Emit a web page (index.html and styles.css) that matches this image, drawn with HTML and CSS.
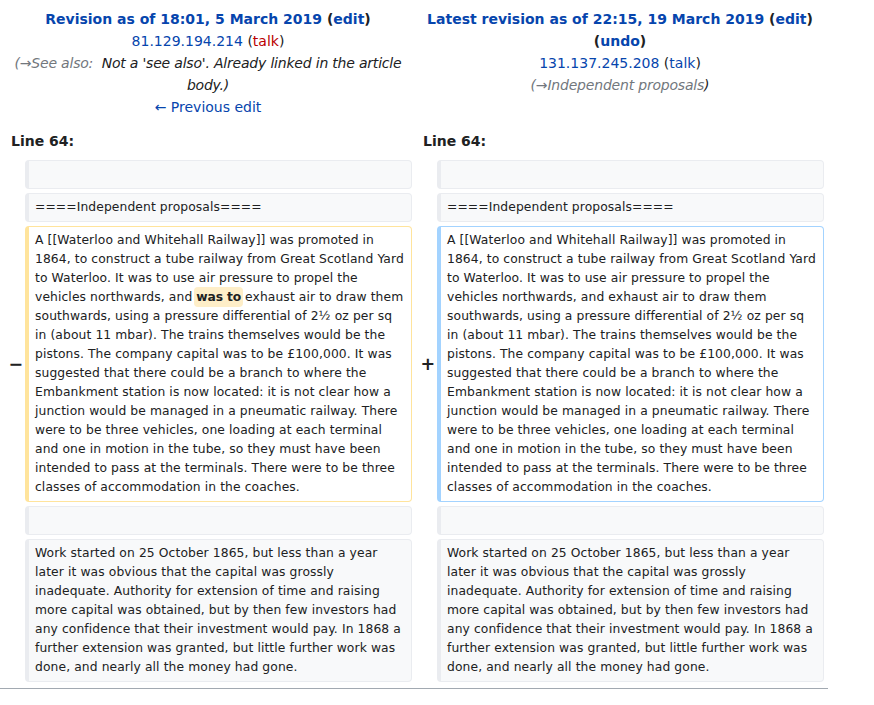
FILE: index.html
```html
<!DOCTYPE html>
<html lang="en">
<head>
<meta charset="utf-8">
<title>Diff</title>
<link rel="stylesheet" href="styles.css">
</head>
<body>
<div class="page">
  <div class="diff">
    <div class="title">
      <div><strong><a class="link" href="#">Revision as of 18:01, 5 March 2019</a> (<a class="link" href="#">edit</a>)</strong></div>
      <div><a class="link" href="#">81.129.194.214</a> (<a class="new" href="#">talk</a>)</div>
      <div class="comment"><span class="auto">(→See also:</span>&nbsp; Not a 'see also'. Already linked in the article body.)</div>
      <div><a class="link" href="#">← Previous edit</a></div>
    </div>
    <div class="title">
      <div><strong><a class="link" href="#">Latest revision as of 22:15, 19 March 2019</a> (<a class="link" href="#">edit</a>)</strong> <strong>(<a class="link" href="#">undo</a>)</strong></div>
      <div><a class="link" href="#">131.137.245.208</a> (<a class="link" href="#">talk</a>)</div>
      <div class="comment"><span class="auto">(→Independent proposals</span>)</div>
    </div>

    <div class="lineno">Line 64:</div>
    <div class="lineno">Line 64:</div>

    <div class="marker"></div>
    <div class="cell context"><br></div>
    <div class="marker"></div>
    <div class="cell context"><br></div>

    <div class="marker"></div>
    <div class="cell context">====Independent proposals====</div>
    <div class="marker"></div>
    <div class="cell context">====Independent proposals====</div>

    <div class="marker">−</div>
    <div class="cell deleted">A [[Waterloo and Whitehall Railway]] was promoted in 1864, to construct a tube railway from Great Scotland Yard to Waterloo. It was to use air pressure to propel the vehicles northwards, and <span class="change">was to</span> exhaust air to draw them southwards, using a pressure differential of 2½ oz per sq in (about 11 mbar). The trains themselves would be the pistons. The company capital was to be £100,000. It was suggested that there could be a branch to where the Embankment station is now located: it is not clear how a junction would be managed in a pneumatic railway. There were to be three vehicles, one loading at each terminal and one in motion in the tube, so they must have been intended to pass at the terminals. There were to be three classes of accommodation in the coaches.</div>
    <div class="marker">+</div>
    <div class="cell added">A [[Waterloo and Whitehall Railway]] was promoted in 1864, to construct a tube railway from Great Scotland Yard to Waterloo. It was to use air pressure to propel the vehicles northwards, and exhaust air to draw them southwards, using a pressure differential of 2½ oz per sq in (about 11 mbar). The trains themselves would be the pistons. The company capital was to be £100,000. It was suggested that there could be a branch to where the Embankment station is now located: it is not clear how a junction would be managed in a pneumatic railway. There were to be three vehicles, one loading at each terminal and one in motion in the tube, so they must have been intended to pass at the terminals. There were to be three classes of accommodation in the coaches.</div>

    <div class="marker"></div>
    <div class="cell context"><br></div>
    <div class="marker"></div>
    <div class="cell context"><br></div>

    <div class="marker"></div>
    <div class="cell context">Work started on 25 October 1865, but less than a year later it was obvious that the capital was grossly inadequate. Authority for extension of time and raising more capital was obtained, but by then few investors had any confidence that their investment would pay. In 1868 a further extension was granted, but little further work was done, and nearly all the money had gone.</div>
    <div class="marker"></div>
    <div class="cell context">Work started on 25 October 1865, but less than a year later it was obvious that the capital was grossly inadequate. Authority for extension of time and raising more capital was obtained, but by then few investors had any confidence that their investment would pay. In 1868 a further extension was granted, but little further work was done, and nearly all the money had gone.</div>
  </div>
  <hr class="diff-hr">
</div>
</body>
</html>
```
FILE: styles.css
```css
html, body {
  margin: 0;
  padding: 0;
  background: #fff;
}
body {
  font-family: "DejaVu Sans", sans-serif;
  font-size: 14px;
  color: #202122;
}
.page {
  width: 828px;
}
.diff {
  display: grid;
  grid-template-columns: 17px 1fr 17px 1fr;
  gap: 4px;
  padding: 4px;
}
.title {
  grid-column: span 2;
  text-align: center;
  padding: 4px 5px;
  line-height: 22px;
}
.link {
  color: #0645ad;
  text-decoration: none;
}
.new {
  color: #ba0000;
  text-decoration: none;
}
.comment {
  font-style: italic;
  letter-spacing: -0.2px;
}
.auto {
  color: #72777d;
}
.lineno {
  grid-column: span 2;
  font-weight: bold;
  padding: 4px 7px;
  line-height: 22px;
}
.marker {
  align-self: center;
  font-size: 17.5px;
  font-weight: bold;
  line-height: 1.2;
  padding: 0 4.4px;
  white-space: nowrap;
}
.cell {
  font-size: 12.32px;
  line-height: 19px;
  letter-spacing: 0.1px;
  white-space: pre-wrap;
  word-wrap: break-word;
  border-style: solid;
  border-width: 1px 1px 1px 4px;
  border-radius: 4px;
  padding: 4px 6px;
  min-width: 0;
}
.context {
  background: #f8f9fa;
  border-color: #eaecf0;
  color: #202122;
}
.deleted {
  border-color: #ffe49c;
}
.added {
  border-color: #a3d3ff;
}
.change {
  font-weight: bold;
  letter-spacing: -0.15px;
  background: #feeec8;
  border-radius: 4px;
  padding: 3px 2px;
  margin: 0 -2px;
}
.diff-hr {
  margin: 2px 0 0;
  border: 0;
  border-top: 1px solid #a2a9b1;
  height: 0;
}
```
